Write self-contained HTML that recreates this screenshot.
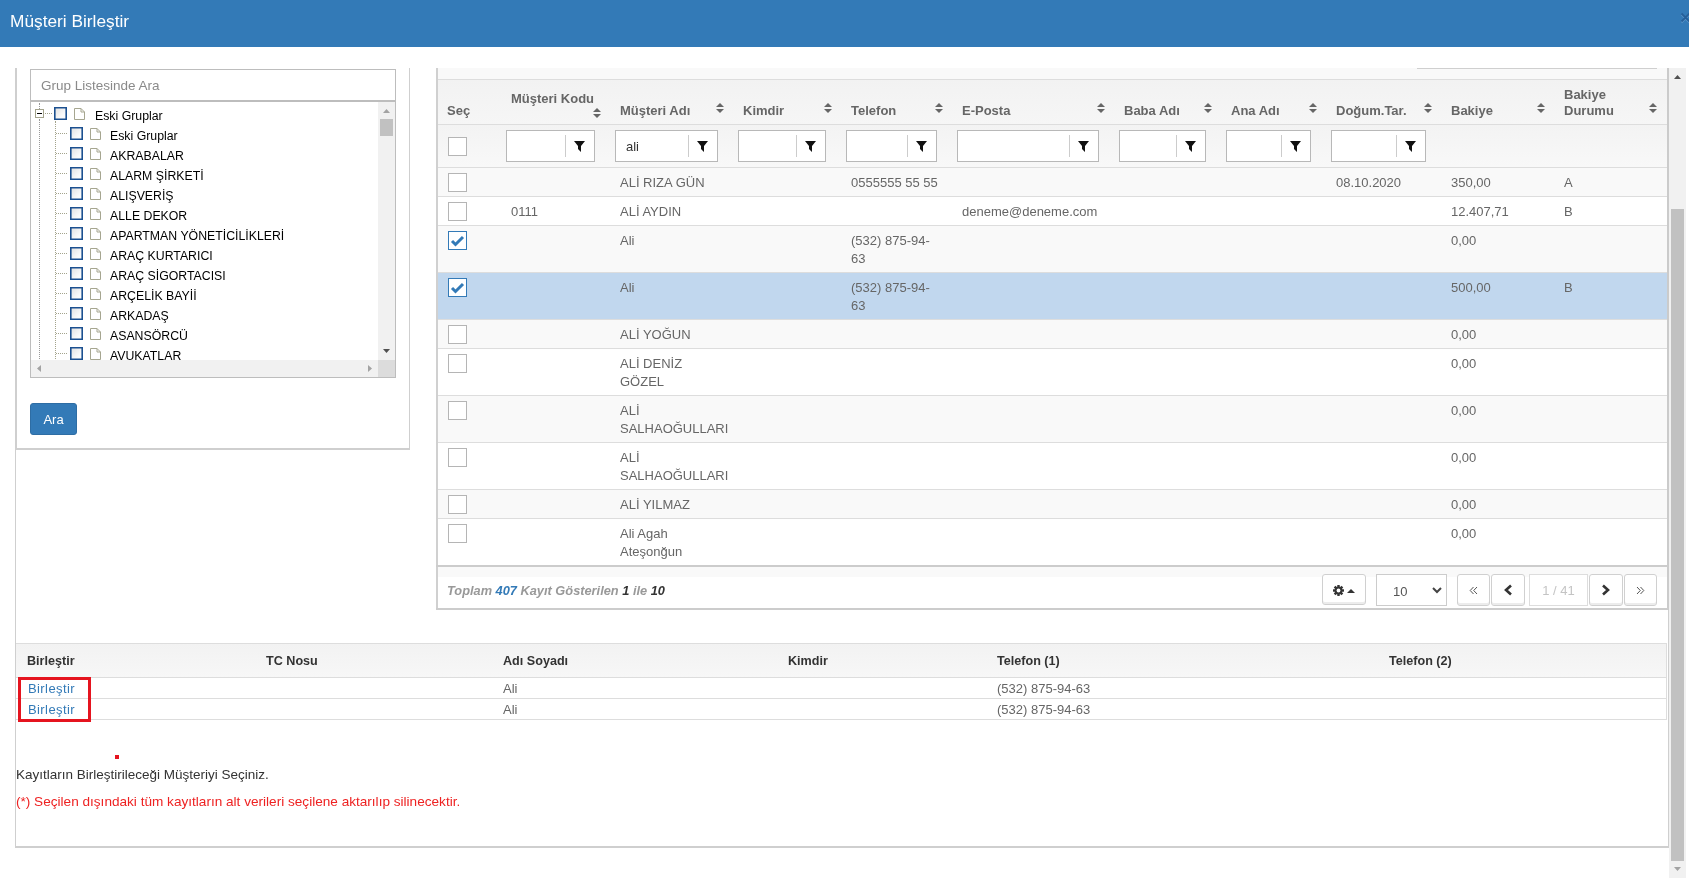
<!DOCTYPE html><html><head><meta charset="utf-8"><style>
*{box-sizing:border-box;margin:0;padding:0}
html,body{width:1689px;height:889px;overflow:hidden;background:#fff;font-family:"Liberation Sans",sans-serif;position:relative}
.a{position:absolute}
.t{position:absolute;white-space:nowrap;font-size:13px;line-height:18px;color:#666}
.hb{font-weight:bold;color:#666}
.sort{position:absolute;width:8px;height:10px}
.fin{position:absolute;height:32px;top:130px;background:#fff;border:1px solid #b8b8b8}
.fin .sep{position:absolute;top:4px;width:1px;height:22px;background:#ccc}
.cb{position:absolute;width:19px;height:19px;border:1px solid #b5b5b5;background:#fff}
.cbc{border-color:#337ab7}
.tr{position:absolute;font-size:12.3px;line-height:16px;color:#000;white-space:nowrap}
.tcb{position:absolute;width:13px;height:13px;border:1px solid #1c5090;box-shadow:inset 0 0 0 0.6px #1c5090;background:linear-gradient(135deg,#e2e2e2,#fbfbfb 70%)}
.pg{position:absolute;width:15px;height:12px}
.btn{position:absolute;top:574px;height:32px;border:1px solid #d0d0d0;border-radius:3px;background:#fff;box-shadow:inset 0 -2px 0 #ececec}
</style></head><body><div style="position:absolute;left:0;top:0;width:1689px;height:889px;overflow:hidden;will-change:transform">
<div class="a" style="left:0;top:0;width:1689px;height:47px;background:#337ab7"></div>
<div class="a" style="left:10px;top:6px;font-size:17.3px;line-height:30px;color:#fff;white-space:nowrap">Müşteri Birleştir</div>
<svg class="a" style="left:1680px;top:11px" width="12" height="14"><path d="M1.5 2.5L9.5 10.5M9.5 2.5L1.5 10.5" transform="translate(0,1)" stroke="#5c95c8" stroke-width="1.8"/><path d="M1.5 2.5L9.5 10.5M9.5 2.5L1.5 10.5" stroke="#26609a" stroke-width="1.8"/></svg>
<div class="a" style="left:15px;top:68px;width:1px;height:780px;background:#cfcfcf"></div>
<div class="a" style="left:15px;top:846px;width:1654px;height:2px;background:#cfcfcf"></div>
<div class="a" style="left:1668px;top:68px;width:1px;height:780px;background:#cfcfcf"></div>
<div class="a" style="left:15px;top:68px;width:2px;height:382px;background:#cfcfcf"></div>
<div class="a" style="left:409px;top:68px;width:1px;height:382px;background:#cfcfcf"></div>
<div class="a" style="left:15px;top:448px;width:395px;height:2px;background:#cfcfcf"></div>
<div class="a" style="left:30px;top:69px;width:366px;height:33px;border:1px solid #bdbdbd;border-bottom:2px solid #bdbdbd"></div>
<div class="t" style="left:41px;top:77px;color:#8a8a8a;font-size:13.5px">Grup Listesinde Ara</div>
<div class="a" style="left:30px;top:102px;width:366px;height:276px;border:1px solid #bdbdbd;border-top:none;overflow:hidden">
<div class="a" style="left:8px;top:1px;width:1px;height:6px;border-left:1px dotted #999"></div>
<div class="a" style="left:4px;top:7px;width:9px;height:9px;border:1px solid #a3a38c;background:#fff"></div>
<div class="a" style="left:6px;top:11px;width:5px;height:1px;background:#000"></div>
<div class="a" style="left:14px;top:11px;width:7px;height:1px;border-top:1px dotted #a3a38c"></div>
<div class="a" style="left:8px;top:17px;width:1px;height:260px;border-left:1px dotted #999"></div>
<div class="tcb" style="left:23px;top:5px"></div>
<svg class="a" style="left:43px;top:6px" width="12" height="13"><path d="M0.5 0.5H7L10.5 4V11.5H0.5Z M7 0.5V4H10.5" fill="#fff" stroke="#a6a690" stroke-width="1"/></svg>
<div class="tr" style="left:64px;top:6px">Eski Gruplar</div>
<div class="a" style="left:24px;top:19px;width:1px;height:260px;border-left:1px dotted #a3a38c"></div>
<div class="a" style="left:25px;top:31px;width:11px;height:1px;border-top:1px dotted #a3a38c"></div>
<div class="tcb" style="left:39px;top:25px"></div>
<svg class="a" style="left:59px;top:26px" width="12" height="13"><path d="M0.5 0.5H7L10.5 4V11.5H0.5Z M7 0.5V4H10.5" fill="#fff" stroke="#a6a690" stroke-width="1"/></svg>
<div class="tr" style="left:79px;top:26px">Eski Gruplar</div>
<div class="a" style="left:25px;top:51px;width:11px;height:1px;border-top:1px dotted #a3a38c"></div>
<div class="tcb" style="left:39px;top:45px"></div>
<svg class="a" style="left:59px;top:46px" width="12" height="13"><path d="M0.5 0.5H7L10.5 4V11.5H0.5Z M7 0.5V4H10.5" fill="#fff" stroke="#a6a690" stroke-width="1"/></svg>
<div class="tr" style="left:79px;top:46px">AKRABALAR</div>
<div class="a" style="left:25px;top:71px;width:11px;height:1px;border-top:1px dotted #a3a38c"></div>
<div class="tcb" style="left:39px;top:65px"></div>
<svg class="a" style="left:59px;top:66px" width="12" height="13"><path d="M0.5 0.5H7L10.5 4V11.5H0.5Z M7 0.5V4H10.5" fill="#fff" stroke="#a6a690" stroke-width="1"/></svg>
<div class="tr" style="left:79px;top:66px">ALARM ŞİRKETİ</div>
<div class="a" style="left:25px;top:91px;width:11px;height:1px;border-top:1px dotted #a3a38c"></div>
<div class="tcb" style="left:39px;top:85px"></div>
<svg class="a" style="left:59px;top:86px" width="12" height="13"><path d="M0.5 0.5H7L10.5 4V11.5H0.5Z M7 0.5V4H10.5" fill="#fff" stroke="#a6a690" stroke-width="1"/></svg>
<div class="tr" style="left:79px;top:86px">ALIŞVERİŞ</div>
<div class="a" style="left:25px;top:111px;width:11px;height:1px;border-top:1px dotted #a3a38c"></div>
<div class="tcb" style="left:39px;top:105px"></div>
<svg class="a" style="left:59px;top:106px" width="12" height="13"><path d="M0.5 0.5H7L10.5 4V11.5H0.5Z M7 0.5V4H10.5" fill="#fff" stroke="#a6a690" stroke-width="1"/></svg>
<div class="tr" style="left:79px;top:106px">ALLE DEKOR</div>
<div class="a" style="left:25px;top:131px;width:11px;height:1px;border-top:1px dotted #a3a38c"></div>
<div class="tcb" style="left:39px;top:125px"></div>
<svg class="a" style="left:59px;top:126px" width="12" height="13"><path d="M0.5 0.5H7L10.5 4V11.5H0.5Z M7 0.5V4H10.5" fill="#fff" stroke="#a6a690" stroke-width="1"/></svg>
<div class="tr" style="left:79px;top:126px">APARTMAN YÖNETİCİLİKLERİ</div>
<div class="a" style="left:25px;top:151px;width:11px;height:1px;border-top:1px dotted #a3a38c"></div>
<div class="tcb" style="left:39px;top:145px"></div>
<svg class="a" style="left:59px;top:146px" width="12" height="13"><path d="M0.5 0.5H7L10.5 4V11.5H0.5Z M7 0.5V4H10.5" fill="#fff" stroke="#a6a690" stroke-width="1"/></svg>
<div class="tr" style="left:79px;top:146px">ARAÇ KURTARICI</div>
<div class="a" style="left:25px;top:171px;width:11px;height:1px;border-top:1px dotted #a3a38c"></div>
<div class="tcb" style="left:39px;top:165px"></div>
<svg class="a" style="left:59px;top:166px" width="12" height="13"><path d="M0.5 0.5H7L10.5 4V11.5H0.5Z M7 0.5V4H10.5" fill="#fff" stroke="#a6a690" stroke-width="1"/></svg>
<div class="tr" style="left:79px;top:166px">ARAÇ SİGORTACISI</div>
<div class="a" style="left:25px;top:191px;width:11px;height:1px;border-top:1px dotted #a3a38c"></div>
<div class="tcb" style="left:39px;top:185px"></div>
<svg class="a" style="left:59px;top:186px" width="12" height="13"><path d="M0.5 0.5H7L10.5 4V11.5H0.5Z M7 0.5V4H10.5" fill="#fff" stroke="#a6a690" stroke-width="1"/></svg>
<div class="tr" style="left:79px;top:186px">ARÇELİK BAYİİ</div>
<div class="a" style="left:25px;top:211px;width:11px;height:1px;border-top:1px dotted #a3a38c"></div>
<div class="tcb" style="left:39px;top:205px"></div>
<svg class="a" style="left:59px;top:206px" width="12" height="13"><path d="M0.5 0.5H7L10.5 4V11.5H0.5Z M7 0.5V4H10.5" fill="#fff" stroke="#a6a690" stroke-width="1"/></svg>
<div class="tr" style="left:79px;top:206px">ARKADAŞ</div>
<div class="a" style="left:25px;top:231px;width:11px;height:1px;border-top:1px dotted #a3a38c"></div>
<div class="tcb" style="left:39px;top:225px"></div>
<svg class="a" style="left:59px;top:226px" width="12" height="13"><path d="M0.5 0.5H7L10.5 4V11.5H0.5Z M7 0.5V4H10.5" fill="#fff" stroke="#a6a690" stroke-width="1"/></svg>
<div class="tr" style="left:79px;top:226px">ASANSÖRCÜ</div>
<div class="a" style="left:25px;top:251px;width:11px;height:1px;border-top:1px dotted #a3a38c"></div>
<div class="tcb" style="left:39px;top:245px"></div>
<svg class="a" style="left:59px;top:246px" width="12" height="13"><path d="M0.5 0.5H7L10.5 4V11.5H0.5Z M7 0.5V4H10.5" fill="#fff" stroke="#a6a690" stroke-width="1"/></svg>
<div class="tr" style="left:79px;top:246px">AVUKATLAR</div>
<div class="a" style="left:347px;top:0;width:17px;height:259px;background:#f1f1f1"></div>
<div class="a" style="left:349px;top:17px;width:13px;height:17px;background:#c1c1c1"></div>
<svg class="a" style="left:352px;top:7px" width="7" height="4"><path d="M0 4L3.5 0L7 4Z" fill="#a3a3a3"/></svg>
<svg class="a" style="left:352px;top:247px" width="7" height="4"><path d="M0 0L3.5 4L7 0Z" fill="#505050"/></svg>
<div class="a" style="left:0;top:258px;width:347px;height:17px;background:#f1f1f1"></div>
<div class="a" style="left:347px;top:258px;width:17px;height:17px;background:#dcdcdc"></div>
<svg class="a" style="left:6px;top:263px" width="4" height="7"><path d="M4 0L0 3.5L4 7Z" fill="#a3a3a3"/></svg>
<svg class="a" style="left:337px;top:263px" width="4" height="7"><path d="M0 0L4 3.5L0 7Z" fill="#a3a3a3"/></svg>
</div>
<div class="a" style="left:30px;top:403px;width:47px;height:32px;background:#337ab7;border:1px solid #2e6da4;border-radius:3px"></div>
<div class="a" style="left:30px;top:411px;width:47px;text-align:center;font-size:13px;line-height:18px;color:#fff">Ara</div>
<div class="a" style="left:436px;top:68px;width:1231px;height:12px;background:#f9f9f9"></div>
<div class="a" style="left:1417px;top:68px;width:240px;height:1px;background:#cfcfcf"></div>
<div class="a" style="left:436px;top:79px;width:1231px;height:1px;background:#ddd"></div>
<div class="a" style="left:436px;top:80px;width:1231px;height:44px;background:linear-gradient(#f2f2f2,#f6f6f6)"></div>
<div class="a" style="left:436px;top:124px;width:1231px;height:1px;background:#ddd"></div>
<div class="a" style="left:436px;top:125px;width:1231px;height:42px;background:linear-gradient(#f3f3f3,#f8f8f8)"></div>
<div class="a" style="left:436px;top:167px;width:1231px;height:1px;background:#ddd"></div>
<div class="a" style="left:436px;top:68px;width:2px;height:541px;background:#d0d0d0"></div>
<div class="a" style="left:1667px;top:68px;width:2px;height:542px;background:#cbcbcb"></div>
<div class="t hb" style="left:447px;top:102px">Seç</div>
<div class="t hb" style="left:511px;top:90px">Müşteri Kodu</div>
<svg class="sort" style="left:593px;top:108px" viewBox="0 0 8 10"><path d="M0 4L4 0L8 4Z M0 6L4 10L8 6Z" fill="#666"/></svg>
<div class="fin" style="left:506px;width:89px"><div class="sep" style="left:58px"></div><svg class="a" style="left:67px;top:10px" width="12" height="12" viewBox="0 0 12 12"><path d="M0 0H11L7 5V11L4 8V5Z" fill="#111"/></svg></div>
<div class="t hb" style="left:620px;top:102px">Müşteri Adı</div>
<svg class="sort" style="left:716px;top:103px" viewBox="0 0 8 10"><path d="M0 4L4 0L8 4Z M0 6L4 10L8 6Z" fill="#666"/></svg>
<div class="fin" style="left:615px;width:103px"><div class="sep" style="left:72px"></div><svg class="a" style="left:81px;top:10px" width="12" height="12" viewBox="0 0 12 12"><path d="M0 0H11L7 5V11L4 8V5Z" fill="#111"/></svg><div class="t" style="left:10px;top:7px;color:#333">ali</div></div>
<div class="t hb" style="left:743px;top:102px">Kimdir</div>
<svg class="sort" style="left:824px;top:103px" viewBox="0 0 8 10"><path d="M0 4L4 0L8 4Z M0 6L4 10L8 6Z" fill="#666"/></svg>
<div class="fin" style="left:738px;width:88px"><div class="sep" style="left:57px"></div><svg class="a" style="left:66px;top:10px" width="12" height="12" viewBox="0 0 12 12"><path d="M0 0H11L7 5V11L4 8V5Z" fill="#111"/></svg></div>
<div class="t hb" style="left:851px;top:102px">Telefon</div>
<svg class="sort" style="left:935px;top:103px" viewBox="0 0 8 10"><path d="M0 4L4 0L8 4Z M0 6L4 10L8 6Z" fill="#666"/></svg>
<div class="fin" style="left:846px;width:91px"><div class="sep" style="left:60px"></div><svg class="a" style="left:69px;top:10px" width="12" height="12" viewBox="0 0 12 12"><path d="M0 0H11L7 5V11L4 8V5Z" fill="#111"/></svg></div>
<div class="t hb" style="left:962px;top:102px">E-Posta</div>
<svg class="sort" style="left:1097px;top:103px" viewBox="0 0 8 10"><path d="M0 4L4 0L8 4Z M0 6L4 10L8 6Z" fill="#666"/></svg>
<div class="fin" style="left:957px;width:142px"><div class="sep" style="left:111px"></div><svg class="a" style="left:120px;top:10px" width="12" height="12" viewBox="0 0 12 12"><path d="M0 0H11L7 5V11L4 8V5Z" fill="#111"/></svg></div>
<div class="t hb" style="left:1124px;top:102px">Baba Adı</div>
<svg class="sort" style="left:1204px;top:103px" viewBox="0 0 8 10"><path d="M0 4L4 0L8 4Z M0 6L4 10L8 6Z" fill="#666"/></svg>
<div class="fin" style="left:1119px;width:87px"><div class="sep" style="left:56px"></div><svg class="a" style="left:65px;top:10px" width="12" height="12" viewBox="0 0 12 12"><path d="M0 0H11L7 5V11L4 8V5Z" fill="#111"/></svg></div>
<div class="t hb" style="left:1231px;top:102px">Ana Adı</div>
<svg class="sort" style="left:1309px;top:103px" viewBox="0 0 8 10"><path d="M0 4L4 0L8 4Z M0 6L4 10L8 6Z" fill="#666"/></svg>
<div class="fin" style="left:1226px;width:85px"><div class="sep" style="left:54px"></div><svg class="a" style="left:63px;top:10px" width="12" height="12" viewBox="0 0 12 12"><path d="M0 0H11L7 5V11L4 8V5Z" fill="#111"/></svg></div>
<div class="t hb" style="left:1336px;top:102px">Doğum.Tar.</div>
<svg class="sort" style="left:1424px;top:103px" viewBox="0 0 8 10"><path d="M0 4L4 0L8 4Z M0 6L4 10L8 6Z" fill="#666"/></svg>
<div class="fin" style="left:1331px;width:95px"><div class="sep" style="left:64px"></div><svg class="a" style="left:73px;top:10px" width="12" height="12" viewBox="0 0 12 12"><path d="M0 0H11L7 5V11L4 8V5Z" fill="#111"/></svg></div>
<div class="t hb" style="left:1451px;top:102px">Bakiye</div>
<svg class="sort" style="left:1537px;top:103px" viewBox="0 0 8 10"><path d="M0 4L4 0L8 4Z M0 6L4 10L8 6Z" fill="#666"/></svg>
<div class="t hb" style="left:1564px;top:86px">Bakiye</div>
<div class="t hb" style="left:1564px;top:102px">Durumu</div>
<svg class="sort" style="left:1649px;top:103px" viewBox="0 0 8 10"><path d="M0 4L4 0L8 4Z M0 6L4 10L8 6Z" fill="#666"/></svg>
<div class="cb" style="left:448px;top:137px"></div>
<div class="a" style="left:438px;top:168px;width:1229px;height:28px;background:#f9f9f9"></div>
<div class="a" style="left:438px;top:196px;width:1229px;height:1px;background:#ddd"></div>
<div class="cb" style="left:448px;top:173px"></div>
<div class="t" style="left:620px;top:174px">ALİ RIZA GÜN</div>
<div class="t" style="left:851px;top:174px">0555555 55 55</div>
<div class="t" style="left:1336px;top:174px">08.10.2020</div>
<div class="t" style="left:1451px;top:174px">350,00</div>
<div class="t" style="left:1564px;top:174px">A</div>
<div class="a" style="left:438px;top:197px;width:1229px;height:28px;background:#fff"></div>
<div class="a" style="left:438px;top:225px;width:1229px;height:1px;background:#ddd"></div>
<div class="cb" style="left:448px;top:202px"></div>
<div class="t" style="left:511px;top:203px">0111</div>
<div class="t" style="left:620px;top:203px">ALİ AYDIN</div>
<div class="t" style="left:962px;top:203px">deneme@deneme.com</div>
<div class="t" style="left:1451px;top:203px">12.407,71</div>
<div class="t" style="left:1564px;top:203px">B</div>
<div class="a" style="left:438px;top:226px;width:1229px;height:46px;background:#f9f9f9"></div>
<div class="a" style="left:438px;top:272px;width:1229px;height:1px;background:#ddd"></div>
<div class="cb cbc" style="left:448px;top:231px"></div>
<svg class="a" style="left:450px;top:235px" width="15" height="12" viewBox="0 0 15 12"><path d="M2 6L5.5 9.5L13 2" fill="none" stroke="#337ab7" stroke-width="3"/></svg>
<div class="t" style="left:620px;top:232px">Ali</div>
<div class="t" style="left:851px;top:232px">(532) 875-94-<br>63</div>
<div class="t" style="left:1451px;top:232px">0,00</div>
<div class="a" style="left:438px;top:273px;width:1229px;height:46px;background:#c1d7ee"></div>
<div class="a" style="left:438px;top:319px;width:1229px;height:1px;background:#ddd"></div>
<div class="cb cbc" style="left:448px;top:278px"></div>
<svg class="a" style="left:450px;top:282px" width="15" height="12" viewBox="0 0 15 12"><path d="M2 6L5.5 9.5L13 2" fill="none" stroke="#337ab7" stroke-width="3"/></svg>
<div class="t" style="left:620px;top:279px">Ali</div>
<div class="t" style="left:851px;top:279px">(532) 875-94-<br>63</div>
<div class="t" style="left:1451px;top:279px">500,00</div>
<div class="t" style="left:1564px;top:279px">B</div>
<div class="a" style="left:438px;top:320px;width:1229px;height:28px;background:#f9f9f9"></div>
<div class="a" style="left:438px;top:348px;width:1229px;height:1px;background:#ddd"></div>
<div class="cb" style="left:448px;top:325px"></div>
<div class="t" style="left:620px;top:326px">ALİ YOĞUN</div>
<div class="t" style="left:1451px;top:326px">0,00</div>
<div class="a" style="left:438px;top:349px;width:1229px;height:46px;background:#fff"></div>
<div class="a" style="left:438px;top:395px;width:1229px;height:1px;background:#ddd"></div>
<div class="cb" style="left:448px;top:354px"></div>
<div class="t" style="left:620px;top:355px">ALİ DENİZ<br>GÖZEL</div>
<div class="t" style="left:1451px;top:355px">0,00</div>
<div class="a" style="left:438px;top:396px;width:1229px;height:46px;background:#f9f9f9"></div>
<div class="a" style="left:438px;top:442px;width:1229px;height:1px;background:#ddd"></div>
<div class="cb" style="left:448px;top:401px"></div>
<div class="t" style="left:620px;top:402px">ALİ<br>SALHAOĞULLARI</div>
<div class="t" style="left:1451px;top:402px">0,00</div>
<div class="a" style="left:438px;top:443px;width:1229px;height:46px;background:#fff"></div>
<div class="a" style="left:438px;top:489px;width:1229px;height:1px;background:#ddd"></div>
<div class="cb" style="left:448px;top:448px"></div>
<div class="t" style="left:620px;top:449px">ALİ<br>SALHAOĞULLARI</div>
<div class="t" style="left:1451px;top:449px">0,00</div>
<div class="a" style="left:438px;top:490px;width:1229px;height:28px;background:#f9f9f9"></div>
<div class="a" style="left:438px;top:518px;width:1229px;height:1px;background:#ddd"></div>
<div class="cb" style="left:448px;top:495px"></div>
<div class="t" style="left:620px;top:496px">ALİ YILMAZ</div>
<div class="t" style="left:1451px;top:496px">0,00</div>
<div class="a" style="left:438px;top:519px;width:1229px;height:46px;background:#fff"></div>
<div class="a" style="left:438px;top:565px;width:1229px;height:1px;background:#ddd"></div>
<div class="cb" style="left:448px;top:524px"></div>
<div class="t" style="left:620px;top:525px">Ali Agah<br>Ateşonğun</div>
<div class="t" style="left:1451px;top:525px">0,00</div>
<div class="a" style="left:436px;top:565px;width:1232px;height:2px;background:#ccc"></div>
<div class="a" style="left:438px;top:567px;width:1229px;height:10px;background:#f9f9f9"></div>
<div class="a" style="left:436px;top:608px;width:1232px;height:2px;background:#ccc"></div>
<div class="t" style="left:447px;top:582px;font-weight:bold;font-style:italic;color:#999;font-size:12.8px">Toplam <span style="color:#337ab7">407</span> Kayıt Gösterilen <span style="color:#333">1</span> ile <span style="color:#333">10</span></div>
<div class="btn" style="left:1322px;top:574px;width:44px;height:31px"></div>
<svg class="a" style="left:1333px;top:585px" width="11" height="11" viewBox="-5.5 -5.5 11 11"><g fill="#333"><rect x="-1.2" y="-5.5" width="2.4" height="11"/><rect x="-1.2" y="-5.5" width="2.4" height="11" transform="rotate(45)"/><rect x="-1.2" y="-5.5" width="2.4" height="11" transform="rotate(90)"/><rect x="-1.2" y="-5.5" width="2.4" height="11" transform="rotate(135)"/><circle r="3.9"/></g><circle r="1.9" fill="#fff"/></svg>
<svg class="a" style="left:1347px;top:589px" width="8" height="4"><path d="M0 4L4 0L8 4Z" fill="#333"/></svg>
<div class="a" style="left:1376px;top:574px;width:71px;height:32px;border:1px solid #ccc;background:#fff"></div>
<div class="t" style="left:1393px;top:583px;color:#555">10</div>
<svg class="a" style="left:1432px;top:587px" width="10" height="7"><path d="M1 1L5 5L9 1" fill="none" stroke="#444" stroke-width="2"/></svg>
<div class="btn" style="left:1457px;width:33px"></div>
<div class="btn" style="left:1491px;width:34px"></div>
<div class="btn" style="left:1589px;width:34px"></div>
<div class="btn" style="left:1624px;width:33px"></div>
<svg class="a" style="left:1469px;top:586px" width="9" height="9"><path d="M4.5 1L1.2 4.5L4.5 8M8 1L4.7 4.5L8 8" fill="none" stroke="#555" stroke-width="1"/></svg>
<svg class="a" style="left:1636px;top:586px" width="9" height="9"><path d="M1 1L4.3 4.5L1 8M4.5 1L7.8 4.5L4.5 8" fill="none" stroke="#555" stroke-width="1"/></svg>
<svg class="a" style="left:1503px;top:584px" width="10" height="12"><path d="M8 1.5L3 6L8 10.5" fill="none" stroke="#333" stroke-width="2.6"/></svg>
<svg class="a" style="left:1601px;top:584px" width="10" height="12"><path d="M2 1.5L7 6L2 10.5" fill="none" stroke="#333" stroke-width="2.6"/></svg>
<div class="a" style="left:1529px;top:574px;width:59px;height:32px;border:1px solid #ddd;background:#fff"></div>
<div class="t" style="left:1529px;top:582px;width:59px;text-align:center;color:#c4c4c4">1 / 41</div>
<div class="a" style="left:16px;top:643px;width:1651px;height:1px;background:#ddd"></div>
<div class="a" style="left:16px;top:644px;width:1651px;height:33px;background:linear-gradient(#f2f2f2,#f7f7f7)"></div>
<div class="a" style="left:16px;top:677px;width:1651px;height:1px;background:#ddd"></div>
<div class="a" style="left:16px;top:698px;width:1651px;height:1px;background:#ddd"></div>
<div class="a" style="left:16px;top:719px;width:1651px;height:1px;background:#ddd"></div>
<div class="a" style="left:1666px;top:643px;width:1px;height:77px;background:#ddd"></div>
<div class="t hb" style="left:27px;top:652px;color:#333;font-size:12.6px">Birleştir</div>
<div class="t hb" style="left:266px;top:652px;color:#333;font-size:12.6px">TC Nosu</div>
<div class="t hb" style="left:503px;top:652px;color:#333;font-size:12.6px">Adı Soyadı</div>
<div class="t hb" style="left:788px;top:652px;color:#333;font-size:12.6px">Kimdir</div>
<div class="t hb" style="left:997px;top:652px;color:#333;font-size:12.6px">Telefon (1)</div>
<div class="t hb" style="left:1389px;top:652px;color:#333;font-size:12.6px">Telefon (2)</div>
<div class="t" style="left:28px;top:680px;color:#337ab7;letter-spacing:0.4px">Birleştir</div>
<div class="t" style="left:503px;top:680px">Ali</div>
<div class="t" style="left:997px;top:680px">(532) 875-94-63</div>
<div class="t" style="left:28px;top:701px;color:#337ab7;letter-spacing:0.4px">Birleştir</div>
<div class="t" style="left:503px;top:701px">Ali</div>
<div class="t" style="left:997px;top:701px">(532) 875-94-63</div>
<div class="a" style="left:18px;top:677px;width:73px;height:45px;border:3px solid #e5141f"></div>
<div class="a" style="left:115px;top:755px;width:4px;height:4px;background:#e5141f"></div>
<div class="t" style="left:16px;top:766px;color:#333;font-size:13.5px">Kayıtların Birleştirileceği Müşteriyi Seçiniz.</div>
<div class="t" style="left:16px;top:793px;color:#e22;font-size:13.6px">(*) Seçilen dışındaki tüm kayıtların alt verileri seçilene aktarılıp silinecektir.</div>
<div class="a" style="left:1669px;top:68px;width:17px;height:810px;background:#f1f1f1"></div>
<div class="a" style="left:1671px;top:209px;width:13px;height:652px;background:#c1c1c1"></div>
<svg class="a" style="left:1674px;top:75px" width="7" height="4"><path d="M0 4L3.5 0L7 4Z" fill="#505050"/></svg>
<svg class="a" style="left:1674px;top:867px" width="7" height="4"><path d="M0 0L3.5 4L7 0Z" fill="#a3a3a3"/></svg>
</div></body></html>
